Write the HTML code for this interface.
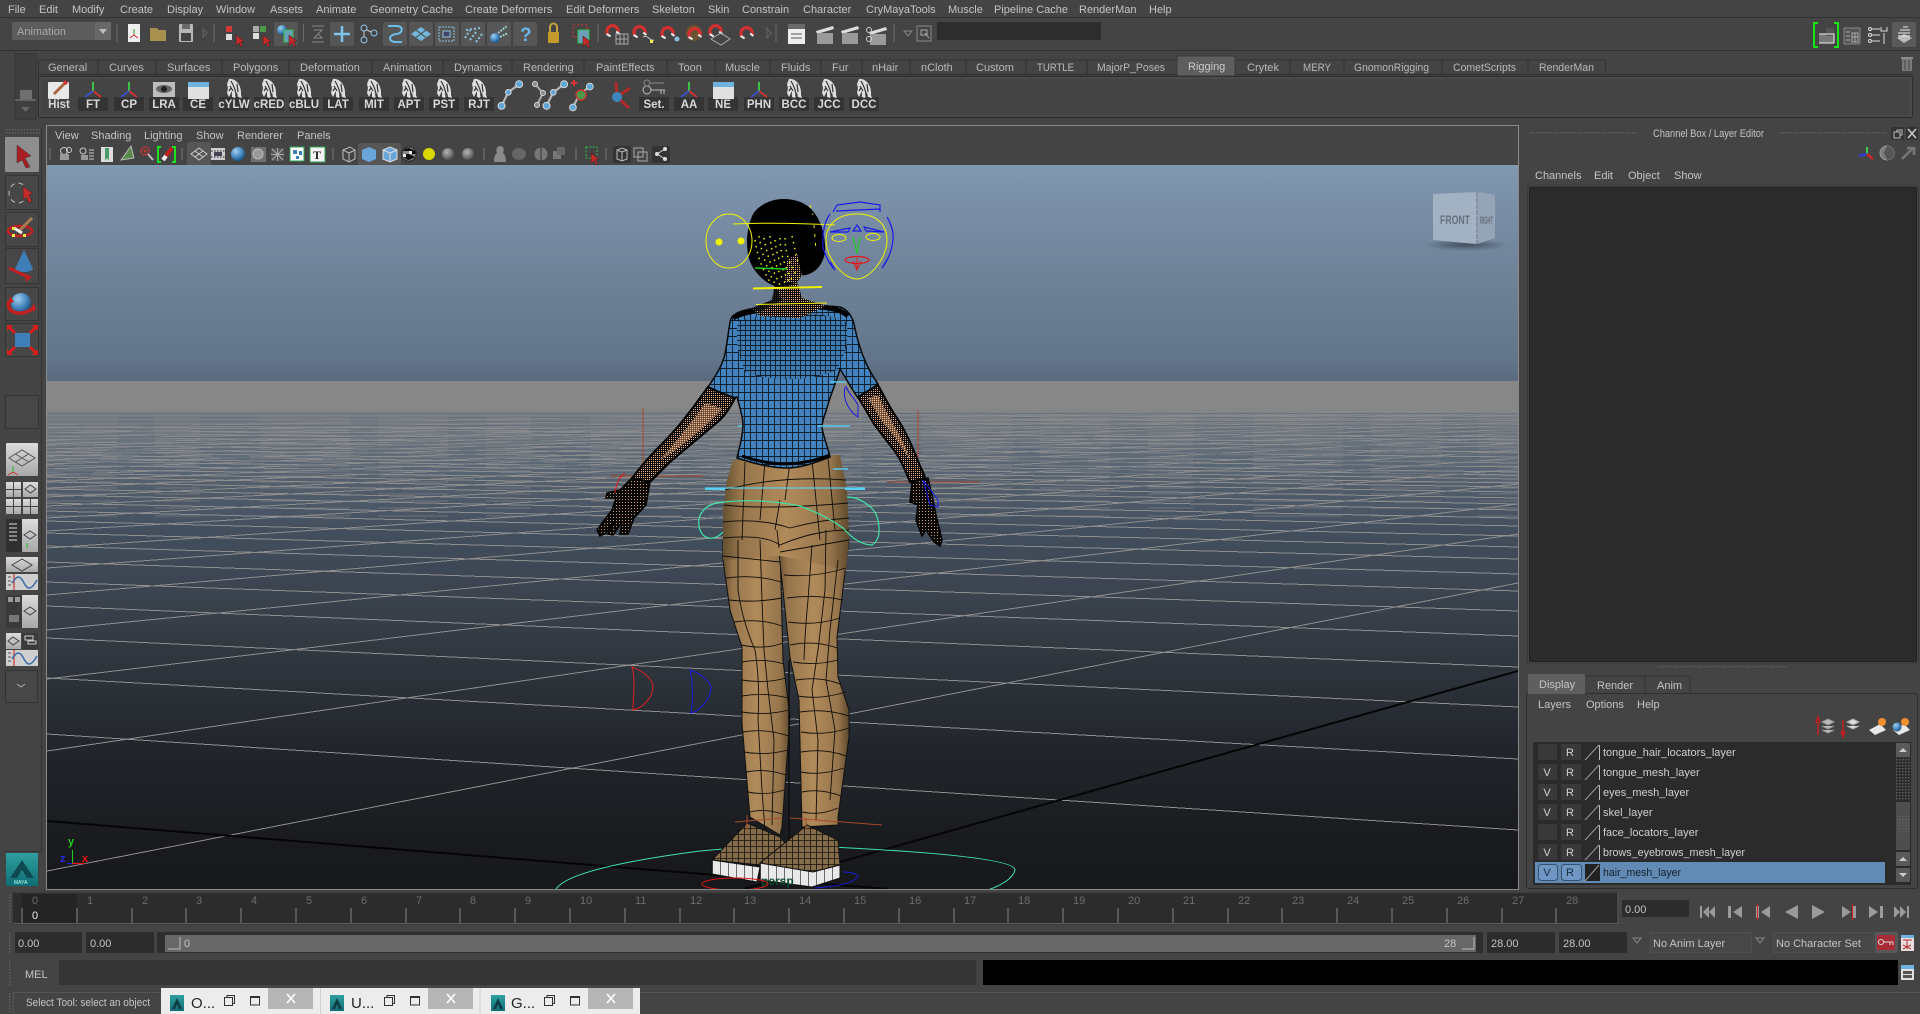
<!DOCTYPE html>
<html><head><meta charset="utf-8"><title>Maya</title>
<style>
html,body{margin:0;padding:0;background:#444;width:1920px;height:1014px;overflow:hidden}
svg{display:block}
text{font-family:"Liberation Sans",sans-serif;font-size:11px;fill:#c4c4c4}
.t{fill:#b9b9b9}
.sl{font-weight:bold;fill:#d8d8d8;text-anchor:middle;font-size:11.5px}
.n{fill:#6c6c6c;font-size:11px}
.r{fill:#d0d0d0;text-anchor:middle}
.w{fill:#252525;font-size:15px}
</style></head><body>
<svg width="1920" height="1014" viewBox="0 0 1920 1014">
<defs>
<linearGradient id="sky" gradientUnits="userSpaceOnUse" x1="0" y1="165" x2="0" y2="381"><stop offset="0" stop-color="#8198b1"/><stop offset=".4" stop-color="#72869d"/><stop offset=".9" stop-color="#63758a"/><stop offset="1" stop-color="#5a6b7e"/></linearGradient>
<linearGradient id="gnd" gradientUnits="userSpaceOnUse" x1="0" y1="381" x2="0" y2="889"><stop offset="0" stop-color="#566879"/><stop offset=".25" stop-color="#465363"/><stop offset=".43" stop-color="#3a424d"/><stop offset=".53" stop-color="#313840"/><stop offset=".72" stop-color="#22262c"/><stop offset=".9" stop-color="#191b1f"/><stop offset="1" stop-color="#16181b"/></linearGradient>
<linearGradient id="fog" gradientUnits="userSpaceOnUse" x1="0" y1="381" x2="0" y2="530"><stop offset="0" stop-color="#878787"/><stop offset=".18" stop-color="#878787"/><stop offset=".22" stop-color="#878787" stop-opacity=".8"/><stop offset=".34" stop-color="#878787" stop-opacity=".55"/><stop offset=".5" stop-color="#878787" stop-opacity=".35"/><stop offset=".7" stop-color="#878787" stop-opacity=".15"/><stop offset="1" stop-color="#878787" stop-opacity="0"/></linearGradient>
<linearGradient id="leg" x1="0" x2="1" y1="0" y2="0"><stop offset="0" stop-color="#65502f"/><stop offset=".14" stop-color="#96754c"/><stop offset=".5" stop-color="#b08a5a"/><stop offset=".85" stop-color="#96754c"/><stop offset="1" stop-color="#5e4a2d"/></linearGradient>
<linearGradient id="btn" x1="0" x2="0" y1="0" y2="1"><stop offset="0" stop-color="#dcdcdc"/><stop offset="1" stop-color="#a8a8a8"/></linearGradient>
<linearGradient id="maya" x1="0" x2="0" y1="0" y2="1"><stop offset="0" stop-color="#2fa0a0"/><stop offset="1" stop-color="#0f6d74"/></linearGradient>
<radialGradient id="ball" cx=".35" cy=".3" r=".8"><stop offset="0" stop-color="#9fd0f0"/><stop offset=".6" stop-color="#3f7fb8"/><stop offset="1" stop-color="#174268"/></radialGradient>
<radialGradient id="gball" cx=".4" cy=".35" r=".8"><stop offset="0" stop-color="#b5b5b5"/><stop offset="1" stop-color="#3a3a3a"/></radialGradient>
<radialGradient id="cubesh"><stop offset="0" stop-color="#3d4957" stop-opacity=".9"/><stop offset="1" stop-color="#3d4957" stop-opacity="0"/></radialGradient>
<pattern id="dots" width="3" height="3" patternUnits="userSpaceOnUse"><rect width="1.4" height="1.4" fill="#636363"/></pattern>
<pattern id="shirt" width="6" height="8" patternUnits="userSpaceOnUse"><rect width="6" height="8" fill="#4283bd"/><path d="M0 .5H6M.5 0V8" stroke="#0c1c2a" stroke-width=".9"/></pattern>
<pattern id="shirt2" width="5" height="5" patternUnits="userSpaceOnUse"><rect width="5" height="5" fill="#3e7db4"/><path d="M0 .5H5M.5 0V5" stroke="#0c1c2a" stroke-width=".9"/></pattern>
<pattern id="skin" width="2" height="2" patternUnits="userSpaceOnUse"><rect width="2" height="2" fill="#0a0806"/><rect x="1" y="1" width="1.2" height="1.2" fill="#eeb48a"/></pattern>
<pattern id="skinhi" width="2" height="2" patternUnits="userSpaceOnUse"><rect width="2" height="2" fill="#3a2418"/><rect x="0" y="0" width="1.4" height="1.4" fill="#efb88e"/></pattern>
<pattern id="skin2" width="3" height="3" patternUnits="userSpaceOnUse"><rect width="3" height="3" fill="#0a0806"/><rect x="1" y="1" width="1" height="1" fill="#d09a74"/></pattern>
<pattern id="shoe" width="6" height="6" patternUnits="userSpaceOnUse"><rect width="6" height="6" fill="#846b49"/><path d="M0 .5H6M.5 0V6" stroke="#14100a" stroke-width=".8"/></pattern>
<pattern id="sole" width="8" height="20" patternUnits="userSpaceOnUse"><rect width="8" height="20" fill="#e9e9e9"/><path d="M.5 0V20" stroke="#333" stroke-width=".7"/></pattern>
<pattern id="stripe" width="4" height="4" patternUnits="userSpaceOnUse"><rect y="1" width="4" height="1.2" fill="#50647b" opacity=".55"/></pattern>
<clipPath id="vp"><rect x="47" y="165" width="1471" height="724"/></clipPath>

<g id="ax"><path d="M0 -8V1" stroke="#3bd24a" stroke-width="1.8"/><path d="M0 1L8 7" stroke="#d83232" stroke-width="1.8"/><path d="M0 1L-8 7" stroke="#3b4fd0" stroke-width="1.8"/></g>
<g id="fe"><path d="M-5 -10C2 -11 8 -3 7 6L8 9L4 8L3 3L1 9L-2 8L-2 2L-5 8L-7 4L-6 -1L-7 -5Z" fill="#dedede"/><path d="M-3 -8C0 -3 2 2 2 7M-4 -3L-1 2M3 -5L4 3M-5 2L-3 -1" stroke="#333" stroke-width="1.2" fill="none"/></g>
<rect id="lb" x="-15" y="97" width="30" height="14" fill="#343434"/>
<g id="win"><rect x="-10" y="-8" width="21" height="17" fill="#e0e0e0"/><rect x="-10" y="-8" width="21" height="5" fill="#6fb2e0"/></g>
<g id="bone"><path d="M-7 8L-2 -2L6 -8" stroke="#b8b8b8" stroke-width="1.6" fill="none"/><circle cx="-7" cy="8" r="2.6" fill="#5fa6d6" stroke="#ddd" stroke-width=".7"/><circle cx="6" cy="-8" r="2.6" fill="#5fa6d6" stroke="#ddd" stroke-width=".7"/><circle cx="-2" cy="-2" r="2.1" fill="#5fa6d6" stroke="#ddd" stroke-width=".7"/></g>
<g id="mag"><path d="M-6 6A7 7 0 1 1 6 4" stroke="#d23030" stroke-width="4" fill="none"/><path d="M-8 5L-3 8M4 2L8 5" stroke="#eee" stroke-width="2.5"/></g>
<g id="clap"><path d="M-9 -3L8 -8L9 -5L-8 0Z" fill="#ddd"/><rect x="-8" y="-1" width="16" height="11" fill="#9a9a9a"/></g>
<path id="cur" d="M0 0L8 6L5 7L7 11L5 12L3 8L0 11Z" fill="#c42a2a" stroke="#222" stroke-width=".5"/>
<rect id="bx" x="-12" y="-12" width="24" height="24" rx="2" fill="#565656"/>
<g id="graph"><rect x="0" y="0" width="32" height="16" fill="#cfcfcf"/><path d="M8 0V16" stroke="#c33" stroke-width="1.2"/><path d="M2 3H5M2 7H5M2 11H5" stroke="#555"/><path d="M6 9C11 1 14 1 18 9S26 15 31 6" stroke="#3a6ea8" stroke-width="1.5" fill="none"/></g>
</defs>

<rect width="1920" height="1014" fill="#444"/>

<!-- menu -->
<path d="M0 17.5H1920M0 50.5H1920" stroke="#313131"/>
<text x="8" y="13">File</text><text x="39" y="13">Edit</text><text x="72" y="13">Modify</text><text x="120" y="13">Create</text><text x="167" y="13">Display</text><text x="216" y="13">Window</text><text x="270" y="13">Assets</text><text x="316" y="13">Animate</text><text x="370" y="13">Geometry Cache</text><text x="465" y="13">Create Deformers</text><text x="566" y="13">Edit Deformers</text><text x="652" y="13">Skeleton</text><text x="708" y="13">Skin</text><text x="742" y="13">Constrain</text><text x="803" y="13">Character</text><text x="866" y="13">CryMayaTools</text><text x="948" y="13">Muscle</text><text x="994" y="13">Pipeline Cache</text><text x="1079" y="13">RenderMan</text><text x="1149" y="13">Help</text>

<!-- status line -->
<rect x="12" y="22" width="99" height="18" rx="2" fill="#5c5c5c"/><rect x="95" y="22" width="16" height="18" fill="#686868"/><path d="M99 29H107L103 34Z" fill="#bbb"/>
<text x="17" y="35" style="fill:#aaa">Animation</text>
<path d="M117 24V42M214 24V42M303.5 24V42M598 24V42M776 24V42M894 24V42" stroke="#6a6a6a"/>
<rect x="128" y="24" width="12" height="18" fill="#eee"/><path d="M134 29V35L130 38M134 35L138 38" stroke="#c33" fill="none"/><path d="M134 29V34" stroke="#2a2"/>
<path d="M150 28H157L159 30H166V41H150Z" fill="#a8904f"/>
<rect x="179" y="24" width="14" height="18" rx="1" fill="#b8b8b8"/><rect x="182" y="24" width="8" height="5" fill="#6a6a6a"/><rect x="181" y="33" width="10" height="8" fill="#444"/>
<path d="M203 29L207 33L203 37Z" fill="none" stroke="#666"/>
<rect x="226" y="26" width="6" height="6" fill="#d23a3a"/><rect x="226" y="34" width="6" height="6" fill="#ddd"/><use href="#cur" x="236" y="35"/>
<rect x="253" y="26" width="6" height="6" fill="#aaa"/><rect x="260" y="26" width="6" height="6" fill="#4a9a4a"/><rect x="253" y="33" width="6" height="6" fill="#ddd"/><use href="#cur" x="263" y="35"/>
<use href="#bx" x="286" y="34"/><circle cx="282" cy="30" r="5" fill="url(#ball)"/><rect x="284" y="30" width="9" height="12" fill="#6aa0b8" stroke="#2fbf4f"/><use href="#cur" x="289" y="35"/>
<path d="M312 26H324M314 30H322L318 34L322 38H314L318 34M312 42H324" stroke="#888" fill="none"/>
<use href="#bx" x="342" y="34"/><path d="M342 26V42M334 34H350" stroke="#7fc4ec" stroke-width="2.5"/>
<circle cx="364" cy="28" r="3" fill="#444" stroke="#8fc8e8"/><circle cx="364" cy="40" r="3" fill="#444" stroke="#8fc8e8"/><circle cx="374" cy="33" r="3" fill="#444" stroke="#8fc8e8"/><path d="M364 31V37M367 30L371 32" stroke="#ccc"/>
<use href="#bx" x="395" y="34"/><path d="M388 26H397C404 26 403 34 396 34C388 35 388 42 396 42H402" stroke="#6ebce8" stroke-width="2" fill="none"/>
<use href="#bx" x="421" y="34"/><path d="M411 34L421 27L431 34L421 41Z" fill="#74b6dc"/><path d="M416 30L426 37.5M426 30L416 37.5" stroke="#444"/>
<use href="#bx" x="447" y="34"/><rect x="439" y="27" width="15" height="14" fill="none" stroke="#8cc4e0" stroke-dasharray="2 1"/><rect x="443" y="31" width="7" height="6" fill="#446" stroke="#8cc4e0"/>
<use href="#bx" x="473" y="34"/><path d="M465 38L470 30M470 40L476 32M476 42L482 34M466 30L480 28" stroke="#8cc4e0" stroke-width="2" stroke-dasharray="2 2"/>
<use href="#bx" x="499" y="34"/><circle cx="495" cy="38" r="5" fill="url(#ball)"/><path d="M498 33L507 26M500 37L508 33" stroke="#9cc" stroke-width="2" stroke-dasharray="2 1"/>
<use href="#bx" x="525" y="34"/><text x="520" y="41" style="font-size:19px;font-weight:bold;fill:#6fb6e8">?</text>
<rect x="548" y="32" width="11" height="11" rx="1" fill="#c49a2a"/><path d="M550 32V27A3.5 3.5 0 0 1 557 27V32" fill="none" stroke="#c4a040" stroke-width="2"/>
<rect x="573" y="25" width="14" height="12" fill="none" stroke="#d33" stroke-dasharray="2 2"/><rect x="578" y="30" width="11" height="13" fill="#6f9fb8" stroke="#2fbf4f"/><use href="#cur" x="583" y="36"/>
<use href="#mag" transform="translate(613 30) scale(.8)"/><path d="M616 34H628V44H616ZM620 34V44M624 34V44M616 39H628" stroke="#aaa" fill="none"/>
<use href="#mag" transform="translate(640 31) scale(.8)"/><path d="M643 37C648 34 650 42 654 40" stroke="#ccc" fill="none"/><rect x="650" y="40" width="3" height="3" fill="#ee4"/>
<use href="#mag" transform="translate(668 32) scale(.8)"/><circle cx="677" cy="39" r="2.5" fill="#8cc0e0"/>
<circle cx="694" cy="33" r="8" fill="#6a5230"/><use href="#mag" transform="translate(695 33) scale(.8)"/>
<use href="#mag" transform="translate(716 30) scale(.8)"/><path d="M711 39L721 33L730 39L721 45Z" fill="none" stroke="#aaa"/>
<use href="#mag" transform="translate(747 32) scale(.8)"/>
<path d="M767 28L771 33L767 38Z" fill="none" stroke="#666"/>
<rect x="788" y="26" width="17" height="18" fill="#eee"/><rect x="788" y="24" width="17" height="5" fill="#6a6a6a"/><path d="M791 34H802M791 38H802" stroke="#555"/>
<use href="#clap" x="825" y="34"/><use href="#clap" x="850" y="34"/><use href="#clap" x="878" y="35"/><circle cx="869" cy="30" r="2.5" fill="none" stroke="#ccc"/><circle cx="869" cy="39" r="2.5" fill="none" stroke="#ccc"/>
<path d="M904 31H912L908 36Z" fill="none" stroke="#888"/>
<rect x="917" y="26" width="14" height="15" fill="none" stroke="#888"/><path d="M921 30H927V35H921ZM925 33L929 38" stroke="#aaa" fill="none"/>
<rect x="937" y="22" width="164" height="18" rx="1" fill="#2d2d2d"/>

<!-- right status icons -->
<path d="M1818 23H1814V47H1818M1834 23H1838V47H1834" stroke="#12e812" stroke-width="2" fill="none"/>
<rect x="1819" y="34" width="15" height="9" fill="#777"/><rect x="1826" y="28" width="8" height="8" fill="#555"/><path d="M1819 34H1834V43M1819 43H1834" stroke="#eee" fill="none"/>
<rect x="1844" y="28" width="16" height="16" rx="1" fill="#555" stroke="#888"/><path d="M1846 32H1850M1846 36H1850M1846 40H1850M1852 33H1858V42H1852ZM1855 33V42M1852 37H1858" stroke="#aaa" fill="none"/>
<path d="M1872 29H1880M1872 35H1880M1872 41H1880M1884 33V44" stroke="#ddd"/><circle cx="1870" cy="29" r="1.5" fill="none" stroke="#ddd"/><circle cx="1870" cy="35" r="1.5" fill="none" stroke="#ddd"/><circle cx="1870" cy="41" r="1.5" fill="none" stroke="#ddd"/><path d="M1881 27V31H1887V27" fill="none" stroke="#ddd"/>
<rect x="1892" y="22" width="24" height="25" rx="2" fill="#5a5a5a"/><path d="M1897 38L1904 34L1912 38L1904 43Z" fill="#bbb"/><path d="M1898 33H1910M1898 36H1910M1900 30H1910M1903 27H1908" stroke="#eee"/>
<rect x="1902" y="59" width="10" height="12" rx="1" fill="#7a7a7a"/><rect x="1901" y="57" width="12" height="2" fill="#8c8c8c"/><path d="M1905 60V70M1909 60V70" stroke="#444"/>

<!-- shelf -->
<rect x="15" y="54" width="21" height="65" fill="#3f3f3f" stroke="#333"/><rect x="20" y="90" width="12" height="9" fill="#707070"/><path d="M15 100H36" stroke="#888"/><path d="M21 107H30L25.5 112Z" fill="#666"/>
<rect x="38.5" y="76.5" width="1874" height="41" rx="2" fill="#444" stroke="#2c2c2c"/><rect x="40" y="78" width="1871" height="38" fill="#444" stroke="#505050"/>
<path d="M38 74.5H1913" stroke="#2f2f2f"/>
<path d="M38.5 74V60H1605.5V74" stroke="#333" fill="none"/>
<path d="M98 60V74M156 60V74M222 60V74M289 60V74M372 60V74M443 60V74M512 60V74M584 60V74M667 60V74M715 60V74M770 60V74M821 60V74M862 60V74M910 60V74M966 60V74M1026 60V74M1087 60V74M1290 60V74M1344 60V74M1442 60V74M1528 60V74" stroke="#2f2f2f"/>
<rect x="1177" y="56" width="58" height="20" rx="2" fill="#5e5e5e" stroke="#3a3a3a"/>
<text class="t" x="48" y="71">General</text><text class="t" x="109" y="71">Curves</text><text class="t" x="167" y="71">Surfaces</text><text class="t" x="233" y="71">Polygons</text><text class="t" x="300" y="71">Deformation</text><text class="t" x="383" y="71">Animation</text><text class="t" x="454" y="71">Dynamics</text><text class="t" x="523" y="71">Rendering</text><text class="t" x="596" y="71">PaintEffects</text><text class="t" x="678" y="71">Toon</text><text class="t" x="725" y="71">Muscle</text><text class="t" x="781" y="71">Fluids</text><text class="t" x="832" y="71">Fur</text><text class="t" x="872" y="71">nHair</text><text class="t" x="921" y="71">nCloth</text><text class="t" x="976" y="71">Custom</text><text class="t" x="1037" y="71" textLength="37" lengthAdjust="spacingAndGlyphs">TURTLE</text><text class="t" x="1097" y="71" textLength="68" lengthAdjust="spacingAndGlyphs">MajorP_Poses</text><text class="t" x="1188" y="70" style="fill:#ccc">Rigging</text><text class="t" x="1247" y="71" textLength="32" lengthAdjust="spacingAndGlyphs">Crytek</text><text class="t" x="1303" y="71" textLength="28" lengthAdjust="spacingAndGlyphs">MERY</text><text class="t" x="1354" y="71" textLength="75" lengthAdjust="spacingAndGlyphs">GnomonRigging</text><text class="t" x="1453" y="71" textLength="63" lengthAdjust="spacingAndGlyphs">CometScripts</text><text class="t" x="1539" y="71" textLength="55" lengthAdjust="spacingAndGlyphs">RenderMan</text>

<g transform="translate(59 0)"><g transform="translate(0 90)"><rect x="-11" y="-8" width="21" height="17" rx="1" fill="#e8e8e8"/><path d="M-5 4L6 -7" stroke="#a8663a" stroke-width="3"/><path d="M5 -9L8 -6" stroke="#d83030" stroke-width="3"/></g><text class="sl" y="108">Hist</text></g>
<g transform="translate(93 0)"><use href="#lb"/><use href="#ax" y="90"/><text class="sl" y="108">FT</text></g>
<g transform="translate(129 0)"><use href="#lb"/><use href="#ax" y="90"/><text class="sl" y="108">CP</text></g>
<g transform="translate(164 0)"><use href="#lb"/><rect x="-11" y="82" width="22" height="15" fill="#bdbdbd"/><ellipse cy="89" rx="8" ry="4" fill="#666"/><circle cy="89" r="3" fill="#222"/><text class="sl" y="108">LRA</text></g>
<g transform="translate(198 0)"><use href="#lb"/><use href="#win" y="90"/><text class="sl" y="108">CE</text></g>
<g transform="translate(234 0)"><use href="#lb"/><use href="#fe" y="89"/><text class="sl" y="108">cYLW</text></g>
<g transform="translate(269 0)"><use href="#lb"/><use href="#fe" y="89"/><text class="sl" y="108">cRED</text></g>
<g transform="translate(304 0)"><use href="#lb"/><use href="#fe" y="89"/><text class="sl" y="108">cBLU</text></g>
<g transform="translate(338 0)"><use href="#lb"/><use href="#fe" y="89"/><text class="sl" y="108">LAT</text></g>
<g transform="translate(374 0)"><use href="#lb"/><use href="#fe" y="89"/><text class="sl" y="108">MIT</text></g>
<g transform="translate(409 0)"><use href="#lb"/><use href="#fe" y="89"/><text class="sl" y="108">APT</text></g>
<g transform="translate(444 0)"><use href="#lb"/><use href="#fe" y="89"/><text class="sl" y="108">PST</text></g>
<g transform="translate(479 0)"><use href="#lb"/><use href="#fe" y="89"/><text class="sl" y="108">RJT</text></g>
<use href="#bone" transform="translate(511 95) scale(1.35)"/>
<g transform="translate(540 95)"><path d="M-5 -11L3 -2L-3 10" stroke="#aaa" stroke-width="2" fill="none"/><circle cx="-5" cy="-11" r="2.5" fill="#888" stroke="#ddd"/><circle cx="3" cy="-2" r="2.5" fill="#888" stroke="#ddd"/><circle cx="-3" cy="10" r="2.5" fill="#888" stroke="#ddd"/></g>
<path d="M548 82V112" stroke="#555" stroke-width=".6"/>
<use href="#bone" transform="translate(556 95) scale(1.35)"/>
<g transform="translate(582 97)"><use href="#bone" transform="scale(1.3)"/><circle cx="-1" cy="-2" r="5" fill="#4a9a4a" stroke="#c33" stroke-width="1.4"/><path d="M-11 -14H-5M-8 -17V-11" stroke="#d33" stroke-width="2"/></g>
<g transform="translate(617 97)"><path d="M0 0L-1 -15M0 0L13 -9M0 0L12 11" stroke="#b02a2a" stroke-width="3"/><circle r="5" fill="#3d86bd"/></g>
<g transform="translate(654 0)"><use href="#lb"/><circle cx="-7" cy="90" r="4" fill="none" stroke="#bbb"/><path d="M-3 90H11M7 90V94M10 90V94" stroke="#bbb" fill="none"/><circle cx="-7" cy="83" r="3" fill="none" stroke="#888"/><path d="M-4 83H10" stroke="#888"/><text class="sl" y="108">Set.</text></g>
<g transform="translate(689 0)"><use href="#lb"/><use href="#ax" y="90"/><text class="sl" y="108">AA</text></g>
<g transform="translate(723 0)"><use href="#lb"/><use href="#win" y="90"/><text class="sl" y="108">NE</text></g>
<g transform="translate(759 0)"><use href="#lb"/><use href="#ax" y="90"/><text class="sl" y="108">PHN</text></g>
<g transform="translate(794 0)"><use href="#lb"/><use href="#fe" y="89"/><text class="sl" y="108">BCC</text></g>
<g transform="translate(829 0)"><use href="#lb"/><use href="#fe" y="89"/><text class="sl" y="108">JCC</text></g>
<g transform="translate(864 0)"><use href="#lb"/><use href="#fe" y="89"/><text class="sl" y="108">DCC</text></g>

<!-- left toolbox -->
<rect x="5" y="128" width="35" height="6" fill="url(#dots)"/>
<path d="M41.5 128V852M4 851.5H41" stroke="#333"/>
<rect x="5" y="137" width="34" height="35" rx="1" fill="#8e8e8e"/><path d="M17 145L31 156L25 158L30 167L26 168L22 160L17 163Z" fill="#a81e22" stroke="#333" stroke-width=".5"/>
<g fill="#474747" stroke="#353535"><rect x="5.5" y="175.5" width="33" height="34"/><rect x="5.5" y="212.5" width="33" height="34"/><rect x="5.5" y="248.5" width="33" height="35"/><rect x="5.5" y="287.5" width="33" height="33"/><rect x="5.5" y="323.5" width="33" height="33"/><rect x="5.5" y="395.5" width="33" height="33"/></g>
<ellipse cx="18" cy="193" rx="9" ry="10" fill="none" stroke="#bbb" stroke-dasharray="5 4"/><path d="M23 186L33 194L29 195L32 201L29 203L26 197L23 200Z" fill="#c42a2a" stroke="#222" stroke-width=".5"/>
<ellipse cx="20" cy="231" rx="12" ry="5" fill="none" stroke="#c42020" stroke-width="2.5"/><path d="M18 232L32 218" stroke="#a87c50" stroke-width="3"/><path d="M14 228L22 233" stroke="#eee" stroke-width="3"/><rect x="12" y="227" width="3" height="3" fill="#ee4"/><rect x="12" y="234" width="3" height="3" fill="#ee4"/><rect x="23" y="234" width="3" height="3" fill="#ee4"/>
<path d="M24 250L33 269C30 273 18 273 15 269Z" fill="#3f7fb8"/><path d="M9 268L30 278" stroke="#c41e1e" stroke-width="3"/><path d="M26 282L32 277L25 274Z" fill="#c41e1e"/>
<circle cx="21" cy="303" r="10" fill="url(#ball)"/><path d="M9 301C5 312 20 318 34 308" stroke="#c41e1e" stroke-width="3.5" fill="none"/><path d="M10 296L8 304L14 302Z" fill="#c41e1e"/><path d="M34 303L36 310L29 312Z" fill="#c41e1e"/>
<rect x="15" y="333" width="15" height="14" fill="#3f7fb8"/><path d="M15 333L9 327M30 333L36 327M15 347L9 353M30 347L36 353" stroke="#d81e1e" stroke-width="3"/><path d="M7 325H13L7 331ZM38 325H32L38 331ZM7 355H13L7 349ZM38 355H32L38 349Z" fill="#d81e1e"/>

<rect x="6" y="443" width="32" height="33" rx="1" fill="url(#btn)"/><path d="M9 458L22 450L35 458L22 466ZM15.5 454L28.5 462M28.5 454L15.5 462" fill="none" stroke="#555"/><path d="M13 466V472L8 475M13 472L18 475" stroke="#c33" fill="none"/><path d="M13 466V472" stroke="#2b2"/>
<g fill="url(#btn)"><rect x="6" y="482" width="15" height="15"/><rect x="23" y="482" width="15" height="15"/><rect x="6" y="499" width="15" height="15"/><rect x="23" y="499" width="15" height="15"/></g>
<path d="M13.5 482V497M6 489.5H21M6 506.5H21M13.5 499V514M30.5 499V514M23 506.5H38" stroke="#444"/><path d="M25 489L30.5 485L36 489L30.5 493Z" fill="none" stroke="#444"/>
<rect x="6" y="519" width="16" height="33" fill="#303030"/><path d="M9 524H17M9 528H17M9 532H17M9 536H17M9 540H17" stroke="#ddd"/><rect x="22" y="519" width="16" height="33" fill="url(#btn)"/><path d="M24 535L30 531L36 535L30 539Z" fill="none" stroke="#444"/><path d="M27 543V548" stroke="#2b2"/>
<rect x="6" y="557" width="32" height="15" fill="url(#btn)"/><path d="M12 565L22 559L32 565L22 571Z" fill="none" stroke="#444"/><use href="#graph" x="6" y="574"/>
<rect x="6" y="595" width="16" height="33" fill="#3a3a3a"/><rect x="8" y="597" width="5" height="5" fill="#999"/><rect x="15" y="597" width="5" height="5" fill="#999"/><rect x="9" y="615" width="10" height="7" fill="#777"/><rect x="22" y="595" width="16" height="33" fill="url(#btn)"/><path d="M24 611L30 607L36 611L30 615Z" fill="none" stroke="#444"/>
<rect x="6" y="633" width="15" height="16" fill="url(#btn)"/><path d="M8 641L13 637L19 641L13 645Z" fill="none" stroke="#444"/><rect x="22" y="633" width="16" height="16" fill="#3a3a3a"/><path d="M25 636H33V640H25ZM28 641H36V644H28Z" fill="none" stroke="#ccc"/><use href="#graph" x="6" y="650"/>
<rect x="5.5" y="670.5" width="32" height="32" fill="#474747" stroke="#333"/><path d="M17 684L21 687L25 684" stroke="#aaa" fill="none"/>
<rect x="6" y="853" width="32" height="33" fill="url(#maya)"/><path d="M10 878L22 860L34 878L27 878L22 870L17 878Z" fill="#0e4a52"/><text x="14" y="884" style="font-size:5px;fill:#bfe">MAYA</text>

<!-- view panel -->
<rect x="46.5" y="125.5" width="1472" height="764" fill="#444" stroke="#8a8a8a"/>
<text x="55" y="139">View</text><text x="91" y="139">Shading</text><text x="144" y="139">Lighting</text><text x="196" y="139">Show</text><text x="237" y="139">Renderer</text><text x="297" y="139">Panels</text>
<path d="M50 148V160M182 148V160M333 148V160M484 148V160M576 148V160M606 148V160" stroke="#777"/>
<g transform="translate(66 154)"><circle cx="-2" cy="-3" r="3.5" fill="none" stroke="#ccc"/><circle cx="3" cy="-4" r="2.5" fill="none" stroke="#ccc"/><rect x="-6" y="0" width="9" height="6" fill="#999"/></g>
<g transform="translate(87 154)"><circle cx="-4" cy="-3" r="3" fill="none" stroke="#ccc"/><rect x="-6" y="1" width="7" height="5" fill="#999"/><path d="M2 -4H7M2 -1H7M2 2H7M2 5H7" stroke="#ccc"/></g>
<rect x="101" y="147" width="12" height="15" fill="#ddd"/><path d="M105 148V161L107 158L109 161V148" fill="#4a9a6a"/>
<path d="M121 160L131 146L134 158Z" fill="#5a8a4a" stroke="#bbb"/>
<circle cx="145" cy="151" r="4" fill="none" stroke="#d33"/><path d="M148 154L153 160" stroke="#bbb" stroke-width="2"/><path d="M143 151H147M145 149V153" stroke="#d33"/>
<path d="M161 147H158V162H161M172 147H175V162H172" stroke="#1be01b" stroke-width="2" fill="none"/><path d="M163 160L172 148" stroke="#c42020" stroke-width="4"/><path d="M163 160L166 156" stroke="#eee" stroke-width="4"/>
<use href="#bx" x="199" y="154"/><path d="M191 154L199 148L207 154L199 160ZM195 151L203 157M203 151L195 157" fill="none" stroke="#ccc"/>
<rect x="211" y="148" width="14" height="12" fill="#ccc"/><path d="M211 151H225M211 157H225" stroke="#222" stroke-dasharray="1.5 1.5"/><rect x="214" y="152" width="8" height="4" fill="#445"/>
<circle cx="238" cy="154" r="7" fill="url(#ball)"/>
<rect x="251" y="147" width="15" height="15" fill="#707070"/><circle cx="258" cy="154" r="5" fill="#999" stroke="#bbb"/>
<rect x="271" y="148" width="13" height="13" fill="#555"/><path d="M272 149L283 160M283 149L272 160M277.5 148V161M271 154.5H284" stroke="#aaa"/>
<rect x="290" y="147" width="14" height="14" fill="#fff" stroke="#2fa04f"/><path d="M293 150H297V154H293ZM299 151H302V155H299ZM296 156H299V159H296Z" fill="#3a7fb8"/>
<rect x="310" y="147" width="15" height="15" fill="#f4f4f4" stroke="#2fa04f"/><text x="313" y="159" style="font-size:12px;font-weight:bold;fill:#222;font-family:'Liberation Serif',serif">T</text>
<path d="M343 150L350 147L355 150V159L349 162L343 159ZM343 150L349 153V162M349 153L355 150" fill="none" stroke="#bbb"/>
<rect x="358" y="143" width="22" height="22" rx="2" fill="#565656"/><path d="M362 150L369 147L376 150V159L369 162L362 159Z" fill="#6aa5da"/>
<rect x="379" y="143" width="22" height="22" rx="2" fill="#565656"/><path d="M383 150L390 147L397 150V159L390 162L383 159Z" fill="#6aa5da" stroke="#ddd"/><path d="M383 150L390 153V162M390 153L397 150" fill="none" stroke="#ddd"/>
<circle cx="409" cy="154" r="8" fill="#333"/><circle cx="409" cy="154" r="6.5" fill="#888"/><path d="M403 151H409V148A6.5 6.5 0 0 0 403 151ZM409 154H415.5V151L409 148ZM403 154H409V160A6.5 6.5 0 0 1 403 154ZM409 154V160L415 157Z" fill="#111"/><path d="M403 154H406V157H403ZM409 151H412V154H409Z" fill="#eee"/>
<circle cx="429" cy="154" r="6" fill="#d8d800"/>
<circle cx="448" cy="154" r="6" fill="url(#gball)"/><circle cx="468" cy="154" r="6" fill="url(#gball)"/>
<path d="M494 162C494 155 496 154 497 153C495 149 498 146 500 146C503 146 505 149 503 153C504 154 506 155 506 162Z" fill="#8a8a8a"/>
<ellipse cx="519" cy="154" rx="7" ry="6" fill="#666"/>
<circle cx="541" cy="154" r="6.5" fill="#777"/><path d="M541 147V161" stroke="#333"/>
<rect x="553" y="151" width="8" height="8" fill="#777"/><rect x="557" y="147" width="8" height="8" fill="#666"/>
<rect x="586" y="147" width="11" height="11" fill="none" stroke="#2fbf4f" stroke-dasharray="2 1.5"/><use href="#cur" x="591" y="153"/>
<rect x="613" y="146" width="18" height="17" rx="2" fill="#333"/><path d="M617 150L622 148L627 150V159L622 161L617 159ZM617 150L622 152V161M622 152L627 150" fill="none" stroke="#bbb"/>
<rect x="634" y="148" width="9" height="9" fill="none" stroke="#aaa"/><rect x="638" y="152" width="9" height="9" fill="none" stroke="#aaa"/>
<rect x="652" y="146" width="18" height="17" rx="2" fill="#333"/><circle cx="657" cy="154" r="2" fill="#ddd"/><circle cx="665" cy="149" r="2" fill="#ddd"/><circle cx="665" cy="159" r="2" fill="#ddd"/><path d="M657 154L665 149M657 154L665 159" stroke="#ddd"/>

<!-- viewport -->
<g clip-path="url(#vp)">
<rect x="47" y="165" width="1471" height="217" fill="url(#sky)"/>
<rect x="47" y="381" width="1471" height="510" fill="url(#gnd)"/>
<path shape-rendering="crispEdges" fill="none" stroke="#8e8e8e" d="M47 871L1518 583M47 751L1518 534M47 679L1518 504M47 630L1518 484M47 595L1518 469M47 568L1518 458M47 548L1518 450M47 531L1518 443M47 518L1518 437M47 506L1518 433M47 497L1518 429M47 488L1518 425M47 481L1518 422M47 475L1518 420M47 469L1518 417M47 464L1518 415M47 460L1518 413M47 456L1518 412M47 452L1518 410M47 449L1518 409M47 446L1518 408M47 444L1518 407M47 440L1518 405M47 437L1518 404M47 433L1518 402M47 428L1518 400
M47 734L1518 830M47 678L1518 759M47 638L1518 707M47 606L1518 667M47 582L1518 636M47 562L1518 611M47 546L1518 591M47 533L1518 574M47 521L1518 559M47 511L1518 547M47 503L1518 536M47 495L1518 526M47 489L1518 518M47 482L1518 510M47 477L1518 504M47 473L1518 498M47 469L1518 492M47 465L1518 487M47 461L1518 483M47 458L1518 479M47 455L1518 475M47 452L1518 472M47 449L1518 467M47 445L1518 463M47 441L1518 457M47 437L1518 452M47 433L1518 447M47 430L1518 443M47 427L1518 440M47 425L1518 437"/>
<path d="M47 821L888 889M744 889L1518 671" stroke="#050505" stroke-width="2" fill="none"/>
<rect x="47" y="381" width="1471" height="149" fill="url(#fog)"/>
<rect x="47" y="412" width="1471" height="62" fill="url(#stripe)"/>
<path shape-rendering="crispEdges" d="M47 415H1518M47 418H1518M47 421H1518M47 424H1518M47 427H1518M47 430H1518M47 433H1518M47 436H1518M47 439H1518M47 442H1518M47 445H1518M47 449H1518M47 453H1518M47 457H1518M47 461H1518M47 466H1518M47 471H1518M47 476H1518M47 482H1518M47 488H1518M47 494H1518M47 501H1518M47 508H1518M47 516H1518" stroke="#8c8c8c" stroke-opacity=".55" stroke-dasharray="70 38 45 60 90 28" fill="none"/>

<!-- view cube -->
<ellipse cx="1466" cy="245" rx="42" ry="6" fill="url(#cubesh)"/>
<path d="M1433 194L1477 192L1495 195V238L1477 244L1433 240Z" fill="#a3b2c3"/><path d="M1477 192L1495 195V238L1477 244Z" fill="#95a5b7"/><path d="M1477 192V244" stroke="#6c7887" stroke-dasharray="5 1"/>
<text x="1440" y="224" textLength="30" lengthAdjust="spacingAndGlyphs" style="font-weight:bold;font-size:12px;fill:#667080">FRONT</text><text x="1480" y="224" textLength="13" lengthAdjust="spacingAndGlyphs" style="font-weight:bold;font-size:11px;fill:#667080">RIGHT</text>

<!-- foot curve behind -->
<path d="M556 889Q570 868 700 851Q760 845 830 847Q1015 856 1015 870Q1012 882 985 891" fill="none" stroke="#3fe3a8"/>
<path d="M632 667C645 672 653 680 653 687C653 697 643 708 633 710C633 697 636 680 632 667Z" fill="none" stroke="#e02020"/>
<path d="M690 670C702 674 711 682 711 688C711 698 700 711 691 713C693 700 693 682 690 670Z" fill="none" stroke="#1a1ae0"/>
<path d="M643 408V467M918 410V470M610 476H703M887 482H980" stroke="#a8492c"/>
<path d="M845 387C842 400 850 412 858 417L858 405C853 396 847 392 846 386" fill="none" stroke="#1a1ae0"/>

<!-- legs -->
<path d="M723 540L723 560L730 610L742 647L742 723L750 817L780 835L782 827L790 717L783 660L780 547Z" fill="url(#leg)" stroke="#111"/>
<path d="M778 543L790 657L799 700L802 827L838 825L838 817L849 737L849 710L838 677L837 637L849 540Z" fill="url(#leg)" stroke="#111"/>
<path d="M733 460L840 455L847 490L849 540L846 570L780 556L723 560L723 510L727 480Z" fill="url(#leg)"/>
<path d="M789 660V860" stroke="#0c0c0c" stroke-width="1.5"/>
<g fill="none" stroke="#100d08" stroke-width=".9">
<path d="M723 556L780 562M726 578Q755 574 781 582M729 600Q755 603 782 598M734 622Q760 618 782 626M741 645Q765 650 783 643M742 662Q765 658 784 664M742 680Q765 684 786 678M742 696Q765 692 788 698M742 712Q765 716 789 710M743 732Q765 728 789 736M744 752Q765 756 788 750M746 772Q765 768 786 775M748 792Q765 796 784 790M750 812Q765 808 782 814"/>
<path d="M780 552L849 540M784 575Q815 578 846 568M787 598Q815 594 843 600M788 622Q815 626 840 618M790 645Q815 640 837 648M793 662Q815 666 838 660M796 680Q820 676 840 684M798 696Q820 700 846 692M800 712Q825 708 849 716M801 732Q825 736 849 728M801 752Q825 748 846 756M801 772Q820 776 844 768M802 792Q820 788 841 796M802 812Q820 816 838 808"/>
<path d="M738 540L738 590Q742 620 755 650Q760 680 758 720L762 790L765 830M760 540L762 600L764 650L768 690L774 740L772 825M812 545L808 600Q805 630 804 660M826 530L825 590L818 650L812 690L818 740L816 820M838 560L830 630L826 680L835 730L830 800"/>
<path d="M725 490Q780 475 846 480M724 505Q770 510 848 503M723 522Q760 518 790 528Q820 520 849 518M723 538Q765 534 780 545Q815 530 849 530"/>
<path d="M745 462L742 540M765 462L760 520M790 462L785 500M812 460L820 540M828 458L835 530M780 500L775 530M777 530L779 548"/>
</g>

<!-- shoes -->
<path d="M747 823L780 837L787 845L760 865L712 860Z" fill="url(#shoe)" stroke="#111"/>
<path d="M712 860L760 867L757 882L712 874Z" fill="url(#sole)" stroke="#111"/>
<path d="M807 825L838 840L840 865L813 872L760 863Z" fill="url(#shoe)" stroke="#111"/>
<path d="M760 863L813 872L840 865V878L812 887L760 880Z" fill="url(#sole)" stroke="#111"/>
<text x="761" y="885" style="font-weight:bold;font-size:12px;fill:#0b4a2c">persp</text>
<path d="M735 822L782 818M790 818L882 825M747 815V830M806 818V830" stroke="#a8492c"/>
<ellipse cx="735" cy="884" rx="33" ry="6" fill="none" stroke="#e01414"/>
<path d="M815 888Q855 885 858 876Q855 872 843 872" fill="none" stroke="#1a1ae0"/>

<!-- shirt -->
<path d="M730 322C731 314 740 311 750 309L772 307C790 309 805 307 815 305L840 307C848 310 852 316 854 324C857 338 860 350 866 363C870 372 874 378 878 384L858 398C851 388 846 378 840 369C836 383 830 396 827 408C824 417 822 422 822 428C824 438 828 448 830 457C812 464 800 468 787 468C770 468 752 463 737 458C740 445 743 435 743 423C742 413 739 405 737 397L733 398L708 387C714 378 720 370 724 358C727 346 728 334 730 322Z" fill="url(#shirt)" stroke="#0a0a0a" stroke-width="1.5"/>
<path d="M738 322C760 312 820 308 846 322C850 340 845 358 836 370C810 382 770 382 745 372C738 355 735 338 738 322Z" fill="url(#shirt2)"/>
<path d="M733 318C742 312 760 310 773 309C790 311 805 308 815 307C828 307 842 310 848 316" fill="none" stroke="#000" stroke-width="5"/>
<path d="M742 456Q787 472 830 455" fill="none" stroke="#000" stroke-width="3"/>

<!-- arms -->
<path d="M708 387C716 391 726 395 735 398C730 408 726 414 720 420C708 430 690 445 670 462C662 470 656 476 650 482L632 478C640 468 648 458 656 450C668 438 680 425 688 414C696 404 702 395 708 387Z" fill="url(#skin)" stroke="#000" stroke-width="2"/>
<path d="M705 403C712 405 718 407 722 409C712 420 695 435 678 448C670 454 664 458 660 460C670 448 690 425 705 403Z" fill="url(#skinhi)"/>
<path d="M858 397L878 385C884 396 890 408 897 418C906 432 914 450 920 466C923 472 925 476 925 478L910 482C906 472 900 458 894 450C886 440 880 432 874 424C868 414 863 405 858 397Z" fill="url(#skin)" stroke="#000" stroke-width="2"/>
<path d="M868 398L878 395C884 408 892 422 900 436C904 444 908 452 910 460C902 448 892 432 884 424C878 416 873 406 868 398Z" fill="url(#skinhi)"/>
<path d="M650 482L632 478L620 490L607 493L606 498L616 498L612 510L597 530L600 536L606 533L614 522L608 534L613 535L622 522L620 534L628 534L634 518L646 505Z" fill="url(#skin2)" stroke="#000" stroke-width="1.5"/>
<path d="M912 482L928 478L932 495L936 515L942 540L940 546L934 542L926 530L922 536L916 520L918 505L910 502Z" fill="url(#skin2)" stroke="#000" stroke-width="1.5"/>

<!-- neck & head -->
<path d="M775 284L798 284L802 298L826 306L800 318L760 316L752 308L772 300Z" fill="url(#skin)"/>
<path d="M775 284L782 300L760 312L752 308L772 300Z" fill="#000" opacity=".75"/>
<path d="M783 199C796 199 806 203 812 210C820 219 824 230 825 245C826 258 820 268 813 272C808 275 803 276 800 275C799 279 798 282 797 283C790 286 783 287 777 287C768 284 762 279 757 273C751 266 748 258 747.5 250C746 238 748 225 753 214C758 206 770 199 783 199Z" fill="#000"/>
<path d="M787 260L797 254L802 275L796 284L785 282Z" fill="url(#skin)"/>
<path d="M755 240Q758 262 770 282M759 236Q763 262 775 284M764 238Q768 262 780 285M770 236Q772 262 785 283M775 240Q777 262 790 283M780 238Q780 258 792 280M785 238Q785 258 798 278M792 236Q795 250 798 262" fill="none" stroke="#f0f000" stroke-width="1.5" stroke-dasharray="1.5 4.5"/>
<path d="M814 225L816 250M810 205L813 215" stroke="#f0f000" stroke-width="1" stroke-dasharray="3 6"/>
<path d="M755 268L787 269" stroke="#1fd01f" stroke-width="1.5"/>

<!-- face controls -->
<g fill="none" stroke="#f2f200">
<ellipse cx="729" cy="241" rx="23" ry="27"/>
<path d="M733 224Q780 222 835 225"/>
<path d="M753 288.5L822 287" stroke-width="2"/><path d="M756 304.5L827 303"/>
<path d="M857 214C880 214 887 228 887 240C887 258 870 279 857 279C843 279 826 258 826 240C826 226 836 214 857 214Z"/>
<ellipse cx="839" cy="238" rx="7" ry="3.5"/><ellipse cx="873" cy="237" rx="7" ry="3.5"/>
</g>
<circle cx="719" cy="242" r="3.5" fill="#f2f200"/><circle cx="741" cy="241" r="3.5" fill="#f2f200"/>
<g fill="none" stroke="#1a1ae8" stroke-width="1.2">
<path d="M833 212L837 205L860 202L880 205L880 212M836 211L880 209"/>
<path d="M830 214C824 222 822 235 823 247C825 256 830 265 835 270L830 262M887 217C891 224 894 232 893 240C892 250 888 260 882 268L888 258"/>
<path d="M830 232L850 228L848 232ZM884 232L864 227L866 231ZM857 225L861 231H853Z"/>
</g>
<path d="M853 237L857 253L860 237" fill="none" stroke="#1fd01f" stroke-width="1.2"/>
<ellipse cx="857" cy="260" rx="12" ry="3.5" fill="none" stroke="#e81414" stroke-width="1.2"/><path d="M853 261L857 270L861 261M857 258V268" fill="none" stroke="#e81414"/>

<!-- body controls -->
<path d="M705 488H865" stroke="#5ad0f2" stroke-width="1.2"/><path d="M705 489H725M845 489H865" stroke="#5ad0f2" stroke-width="2"/>
<path d="M830 382H846M738 426H742M818 426H850M833 469H848" stroke="#56c8f0" stroke-width="1.5"/>
<path d="M723 502C700 504 696 520 700 530C704 540 715 541 723 532" fill="none" stroke="#3fe3a8" stroke-width="1.2"/>
<path d="M723 502Q760 498 800 506Q825 515 843 528Q858 545 872 545Q880 540 879 527Q878 512 868 505Q858 497 847 497" fill="none" stroke="#3fe3a8" stroke-width="1.2"/>
<path d="M625 473Q617 478 615 493" fill="none" stroke="#e01414"/>
<path d="M923 480L938 500V507L930 505Z" fill="none" stroke="#1a1ae8"/>
</g>
<!-- axis -->
<path d="M72.5 850V863" stroke="#1fd01f"/><path d="M72 863.5H85" stroke="#e01414" stroke-width="1.2"/><path d="M67 863.5H72" stroke="#1a1ae8" stroke-width="1.2"/>
<text x="68" y="845" style="font-weight:bold;fill:#1fd01f">y</text><text x="60" y="862" style="font-weight:bold;fill:#2828e8">z</text><text x="82" y="862" style="font-weight:bold;fill:#e01414">x</text>

<!-- right panel -->
<rect x="1530" y="131" width="108" height="4" fill="url(#dots)"/><rect x="1779" y="131" width="108" height="4" fill="url(#dots)"/>
<text x="1653" y="137" textLength="111" lengthAdjust="spacingAndGlyphs">Channel Box / Layer Editor</text>
<rect x="1891" y="127" width="13" height="13" fill="#333"/><path d="M1894 132H1900V138H1894ZM1897 132V130H1902V135H1900" fill="none" stroke="#bbb"/>
<rect x="1906" y="127" width="12" height="13" fill="#333"/><path d="M1908 129L1916 138M1916 129L1908 138" stroke="#ccc" stroke-width="1.5"/>
<path d="M1867 147V154" stroke="#3bd24a" stroke-width="2"/><path d="M1867 154L1859 156" stroke="#2d3fd0" stroke-width="2.5"/><path d="M1867 154L1873 159" stroke="#c82a2a" stroke-width="2.5"/>
<circle cx="1887" cy="153" r="7" fill="#7c7c7c" stroke="#999"/><path d="M1887 146A7 7 0 0 1 1887 160L1884 153Z" fill="#555"/>
<path d="M1902 159L1912 149M1907 148H1914V155" stroke="#777" stroke-width="2.5" fill="none"/>
<text x="1535" y="179">Channels</text><text x="1594" y="179">Edit</text><text x="1628" y="179">Object</text><text x="1674" y="179">Show</text>
<rect x="1529.5" y="187.5" width="387" height="474" rx="1" fill="#2b2b2b" stroke="#222"/><rect x="1527.5" y="186" width="391" height="477" fill="none" stroke="#383838"/>
<rect x="1657" y="665" width="130" height="3" fill="url(#dots)"/>
<rect x="1526.5" y="693.5" width="391" height="195" rx="2" fill="#444" stroke="#2e2e2e"/>
<path d="M1585 676H1690V693" fill="none" stroke="#333"/><path d="M1645 676V693" stroke="#333"/>
<rect x="1528" y="674" width="57" height="20" fill="#5f5f5f"/>
<text x="1539" y="688">Display</text><text x="1597" y="689">Render</text><text x="1657" y="689">Anim</text>
<text x="1538" y="708">Layers</text><text x="1586" y="708">Options</text><text x="1637" y="708">Help</text>
<path d="M1816 723L1818 717L1820 723M1818 722V735" stroke="#c41e1e" fill="none" stroke-width="1.5"/><path d="M1822 722L1828 719L1834 722L1828 725ZM1822 726L1828 729L1834 726M1822 730L1828 733L1834 730" fill="#bbb" stroke="#999"/>
<path d="M1841 731L1843 737L1845 731M1843 720V734" stroke="#c41e1e" fill="none" stroke-width="1.5"/><path d="M1847 722L1853 719L1859 722L1853 725ZM1847 726L1853 729L1859 726" fill="#ddd" stroke="#aaa"/>
<path d="M1869 730L1880 724L1886 730L1875 735Z" fill="#e8e8e8"/><circle cx="1882" cy="722" r="4" fill="#f09030"/>
<path d="M1893 730L1904 724L1910 730L1899 735Z" fill="#e8e8e8"/><circle cx="1897" cy="727" r="4.5" fill="url(#ball)"/><circle cx="1905" cy="722" r="4" fill="#f09030"/>
<rect x="1533" y="742" width="378" height="143" fill="#2b2b2b"/>
<rect x="1896" y="743" width="14" height="14" rx="1" fill="#5a5a5a"/><path d="M1899 752L1903 748L1907 752Z" fill="#ccc"/>
<rect x="1896" y="757" width="14" height="44" fill="url(#dots)"/>
<rect x="1896" y="802" width="14" height="48" rx="1" fill="#4e4e4e"/><rect x="1897" y="816" width="12" height="18" fill="url(#dots)"/>
<rect x="1896" y="852" width="14" height="14" rx="1" fill="#5a5a5a"/><path d="M1899 861L1903 857L1907 861Z" fill="#ccc"/>
<rect x="1896" y="868" width="14" height="14" rx="1" fill="#5a5a5a"/><path d="M1899 873L1903 877L1907 873Z" fill="#ccc"/>
<rect x="1535" y="862" width="350" height="21" fill="#618ab5"/>
<g fill="#393939">
<rect x="1538" y="744" width="19" height="16"/><rect x="1561" y="744" width="20" height="16"/>
<rect x="1538" y="764" width="19" height="16"/><rect x="1561" y="764" width="20" height="16"/>
<rect x="1538" y="784" width="19" height="16"/><rect x="1561" y="784" width="20" height="16"/>
<rect x="1538" y="804" width="19" height="16"/><rect x="1561" y="804" width="20" height="16"/>
<rect x="1538" y="824" width="19" height="16"/><rect x="1561" y="824" width="20" height="16"/>
<rect x="1538" y="844" width="19" height="16"/><rect x="1561" y="844" width="20" height="16"/>
</g>
<rect x="1538.5" y="864.5" width="19" height="16" rx="3" fill="#6e97c4" stroke="#36506e"/><rect x="1561.5" y="864.5" width="20" height="16" rx="3" fill="#6e97c4" stroke="#36506e"/>
<rect x="1585" y="864" width="15" height="17" fill="#222"/>
<path d="M1585 760L1599 745M1585 780L1599 765M1585 800L1599 785M1585 820L1599 805M1585 840L1599 825M1585 860L1599 845M1585 881L1599 865" stroke="#999"/>
<path d="M1599.5 745V760M1599.5 765V780M1599.5 785V800M1599.5 805V820M1599.5 825V840M1599.5 845V860" stroke="#bbb"/>
<text class="r" x="1547" y="776">V</text><text class="r" x="1547" y="796">V</text><text class="r" x="1547" y="816">V</text><text class="r" x="1547" y="856">V</text><text class="r" x="1547" y="876" style="fill:#1d2c3e">V</text>
<text class="r" x="1570" y="756">R</text><text class="r" x="1570" y="776">R</text><text class="r" x="1570" y="796">R</text><text class="r" x="1570" y="816">R</text><text class="r" x="1570" y="836">R</text><text class="r" x="1570" y="856">R</text><text class="r" x="1570" y="876" style="fill:#1d2c3e">R</text>
<text x="1603" y="756" style="fill:#cfcfcf">tongue_hair_locators_layer</text>
<text x="1603" y="776" style="fill:#cfcfcf">tongue_mesh_layer</text>
<text x="1603" y="796" style="fill:#cfcfcf">eyes_mesh_layer</text>
<text x="1603" y="816" style="fill:#cfcfcf">skel_layer</text>
<text x="1603" y="836" style="fill:#cfcfcf">face_locators_layer</text>
<text x="1603" y="856" textLength="142" lengthAdjust="spacingAndGlyphs" style="fill:#cfcfcf">brows_eyebrows_mesh_layer</text>
<text x="1603" y="876" textLength="78" lengthAdjust="spacingAndGlyphs" style="fill:#16202c">hair_mesh_layer</text>

<!-- time slider -->
<rect x="8" y="893" width="4" height="30" fill="url(#dots)"/><rect x="8" y="932" width="4" height="21" fill="url(#dots)"/><rect x="8" y="960" width="4" height="25" fill="url(#dots)"/><rect x="8" y="992" width="4" height="22" fill="url(#dots)"/>
<rect x="13" y="893" width="1605" height="31" fill="#2c2c2c" stroke="#353535"/>
<rect x="22" y="894" width="55" height="29" fill="#242424"/>
<path d="M13 923.5H1618M1618 893V924" stroke="#5a5a5a"/>
<path stroke="#666" stroke-width="1.5" d="M22 908V923M77 908V923M132 908V923M186 908V923M241 908V923M296 908V923M351 908V923M406 908V923M460 908V923M515 908V923M570 908V923M625 908V923M680 908V923M734 908V923M789 908V923M844 908V923M899 908V923M954 908V923M1008 908V923M1063 908V923M1118 908V923M1173 908V923M1228 908V923M1282 908V923M1337 908V923M1392 908V923M1447 908V923M1502 908V923M1556 908V923"/>
<text class="n" x="32" y="904">0</text><text class="n" x="87" y="904">1</text><text class="n" x="142" y="904">2</text><text class="n" x="196" y="904">3</text><text class="n" x="251" y="904">4</text><text class="n" x="306" y="904">5</text><text class="n" x="361" y="904">6</text><text class="n" x="416" y="904">7</text><text class="n" x="470" y="904">8</text><text class="n" x="525" y="904">9</text><text class="n" x="580" y="904">10</text><text class="n" x="635" y="904">11</text><text class="n" x="690" y="904">12</text><text class="n" x="744" y="904">13</text><text class="n" x="799" y="904">14</text><text class="n" x="854" y="904">15</text><text class="n" x="909" y="904">16</text><text class="n" x="964" y="904">17</text><text class="n" x="1018" y="904">18</text><text class="n" x="1073" y="904">19</text><text class="n" x="1128" y="904">20</text><text class="n" x="1183" y="904">21</text><text class="n" x="1238" y="904">22</text><text class="n" x="1292" y="904">23</text><text class="n" x="1347" y="904">24</text><text class="n" x="1402" y="904">25</text><text class="n" x="1457" y="904">26</text><text class="n" x="1512" y="904">27</text><text class="n" x="1566" y="904">28</text>
<text x="32" y="919" style="fill:#eee">0</text>
<rect x="1622" y="900" width="67" height="17" rx="1" fill="#2c2c2c"/><text x="1625" y="913">0.00</text>
<g fill="#9a9a9a">
<path d="M1700 906H1702V918H1700ZM1709 906V918L1703 912ZM1715 906V918L1709 912Z"/>
<path d="M1728 906H1731V918H1728ZM1742 906V918L1733 912Z"/>
<path d="M1756 906H1759V918H1756ZM1770 906V918L1761 912Z"/>
<path d="M1798 905V919L1785 912Z"/>
<path d="M1812 905V919L1825 912Z"/>
<path d="M1842 906L1851 912L1842 918ZM1853 906H1856V918H1853Z"/>
<path d="M1869 906L1878 912L1869 918ZM1880 906H1883V918H1880Z"/>
<path d="M1894 906L1900 912L1894 918ZM1900 906L1906 912L1900 918ZM1907 906H1909V918H1907Z"/>
</g>
<path d="M1757.5 904V920M1852.5 904V920" stroke="#d02020"/>

<!-- range slider -->
<rect x="15" y="932" width="67" height="21" rx="1" fill="#2c2c2c"/><rect x="86" y="932" width="68" height="21" rx="1" fill="#2c2c2c"/>
<text x="18" y="947">0.00</text><text x="90" y="947">0.00</text>
<rect x="157" y="932" width="1326" height="21" fill="#2e2e2e"/>
<rect x="165" y="935" width="1311" height="17" fill="#676767"/>
<path d="M180 937V949H168M1474 937V949H1462" stroke="#bbb" fill="none"/>
<text x="184" y="947">0</text><text x="1444" y="947">28</text>
<rect x="1487" y="932" width="68" height="21" rx="1" fill="#2c2c2c"/><rect x="1559" y="932" width="68" height="21" rx="1" fill="#2c2c2c"/>
<text x="1491" y="947">28.00</text><text x="1563" y="947">28.00</text>
<path d="M1633 938H1641L1637 943Z" fill="none" stroke="#888"/><path d="M1756 938H1764L1760 943Z" fill="none" stroke="#888"/>
<rect x="1650.5" y="932.5" width="101" height="20" fill="#474747" stroke="#4f4f4f"/><text x="1653" y="947">No Anim Layer</text>
<rect x="1773.5" y="932.5" width="100" height="20" fill="#474747" stroke="#4f4f4f"/><text x="1776" y="947">No Character Set</text>
<rect x="1875" y="932" width="23" height="21" rx="2" fill="#585858"/><rect x="1877" y="935" width="18" height="15" fill="#a82c36"/><circle cx="1881" cy="942" r="2.5" fill="none" stroke="#ddd"/><path d="M1883 942H1893M1890 942V945M1893 942V945" stroke="#ddd"/>
<rect x="1901" y="935" width="13" height="16" fill="#e8dcdc"/><rect x="1901" y="935" width="13" height="3" fill="#6fb2e0"/><path d="M1903 940H1912M1907 940V949M1903 945L1911 949M1911 945L1903 949" stroke="#b83030"/>

<!-- command line -->
<text x="25" y="978">MEL</text>
<rect x="59" y="960" width="917" height="25" fill="#353535"/>
<rect x="983" y="960" width="915" height="25" fill="#000"/>
<rect x="1901" y="965" width="13" height="15" fill="#e0e0e0"/><rect x="1901" y="965" width="13" height="4" fill="#6fb2e0"/><rect x="1903" y="971" width="9" height="3" fill="#555"/><rect x="1903" y="975" width="9" height="3" fill="#555"/>

<!-- help line -->
<rect x="13.5" y="992.5" width="148" height="22" fill="#444" stroke="#555"/>
<path d="M640 992.5H1920" stroke="#555"/>
<text x="26" y="1006" textLength="124" lengthAdjust="spacingAndGlyphs">Select Tool: select an object</text>

<!-- minimized windows -->
<rect x="161" y="988" width="479" height="26" fill="#ececec"/>
<path d="M320.5 988V1014M480 988V1014" stroke="#cfcfcf"/>
<rect x="268" y="988" width="45" height="21" fill="#b6b6b6"/><rect x="428" y="988" width="45" height="21" fill="#b6b6b6"/><rect x="588" y="988" width="45" height="21" fill="#b6b6b6"/>
<path d="M287 994L295 1003M295 994L287 1003M447 994L455 1003M455 994L447 1003M607 994L615 1003M615 994L607 1003" stroke="#fff" stroke-width="1.5"/>
<g fill="none" stroke="#333">
<path d="M224.5 997.5H232.5V1005.5H224.5ZM227 997V995.5H234.5V1003.5H233"/><rect x="250.5" y="996.5" width="9" height="8.5"/><path d="M250 997.5H260"/>
<path d="M384.5 997.5H392.5V1005.5H384.5ZM387 997V995.5H394.5V1003.5H393"/><rect x="410.5" y="996.5" width="9" height="8.5"/><path d="M410 997.5H420"/>
<path d="M544.5 997.5H552.5V1005.5H544.5ZM547 997V995.5H554.5V1003.5H553"/><rect x="570.5" y="996.5" width="9" height="8.5"/><path d="M570 997.5H580"/>
</g>
<rect x="170" y="995" width="14" height="16" fill="url(#maya)"/><path d="M172 1009L177 998L182 1009L179 1009L177 1004L175 1009Z" fill="#0e3a42"/>
<rect x="330" y="995" width="14" height="16" fill="url(#maya)"/><path d="M332 1009L337 998L342 1009L339 1009L337 1004L335 1009Z" fill="#0e3a42"/>
<rect x="491" y="995" width="14" height="16" fill="url(#maya)"/><path d="M493 1009L498 998L503 1009L500 1009L498 1004L496 1009Z" fill="#0e3a42"/>
<text class="w" x="191" y="1008">O...</text><text class="w" x="351" y="1008">U...</text><text class="w" x="511" y="1008">G...</text>
</svg>
</body></html>
